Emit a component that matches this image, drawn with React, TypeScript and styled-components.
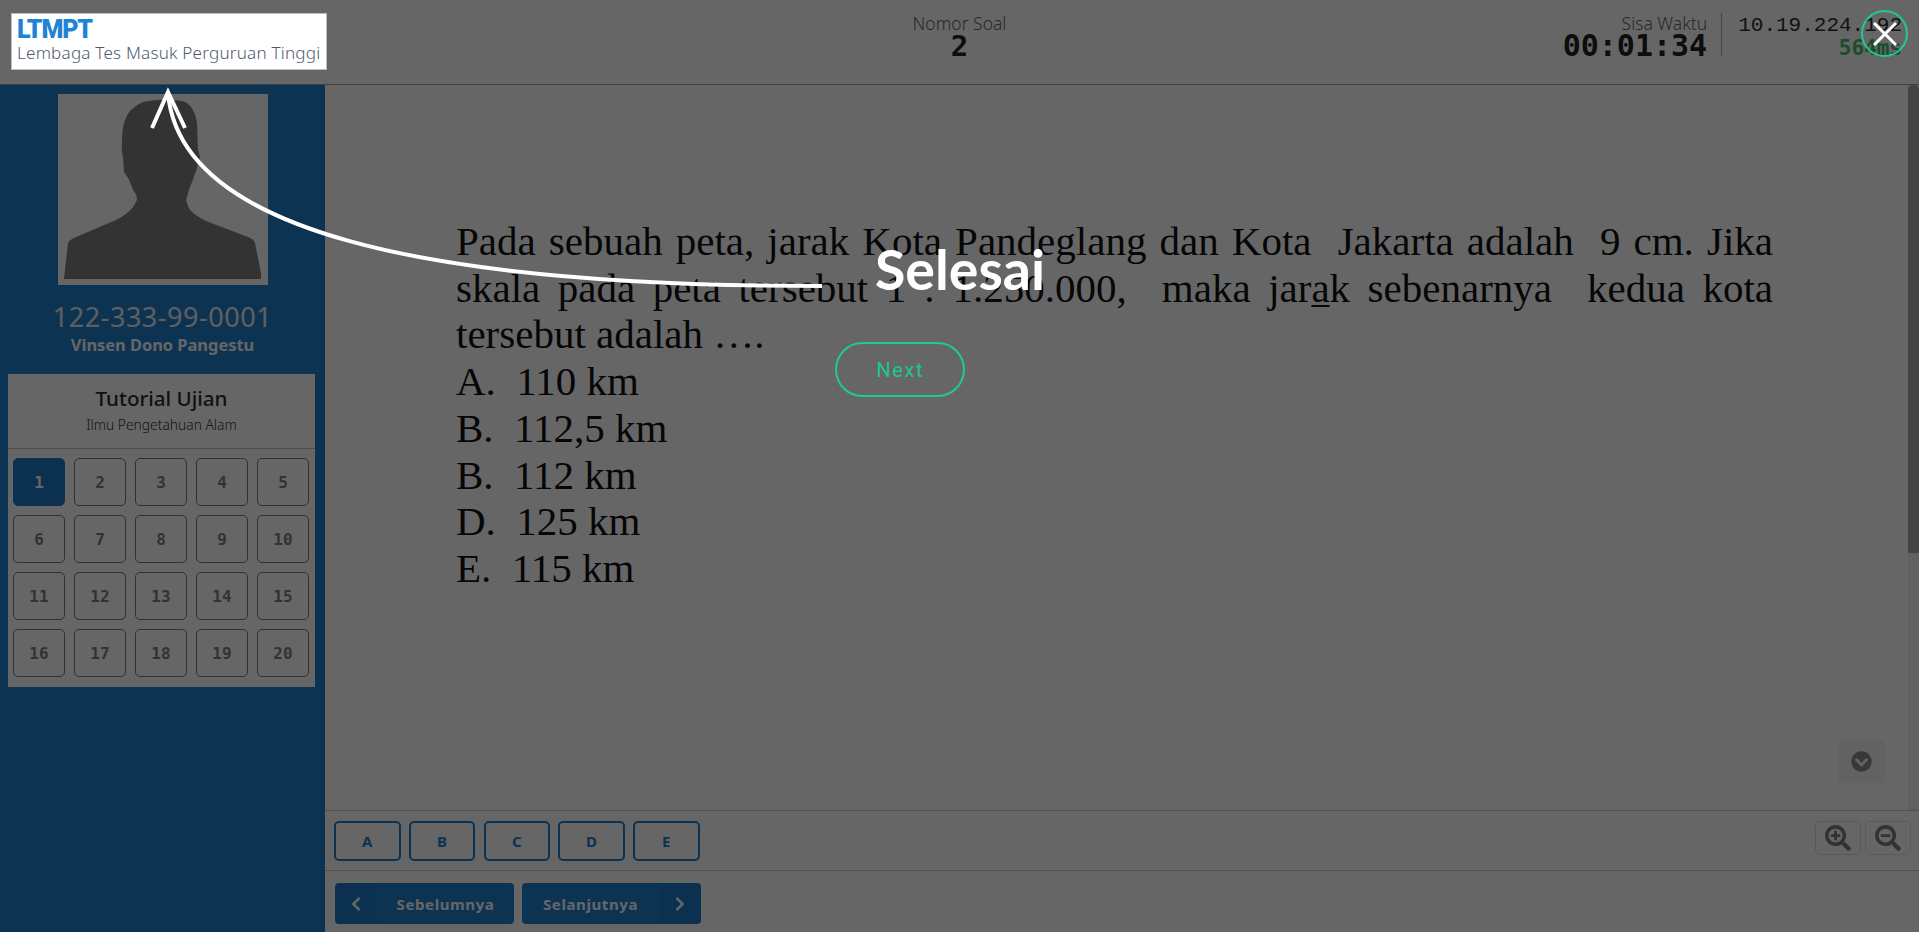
import React from "react";
import styled, { createGlobalStyle } from "styled-components";
import { FaChevronCircleDown, FaChevronLeft, FaChevronRight, FaSearchMinus, FaSearchPlus } from "react-icons/fa";

const sans = `"Noto Sans", Inter, sans-serif`;
const mono = `"DejaVu Sans Mono", "Liberation Mono", monospace`;

const Global = createGlobalStyle`
  html, body { margin: 0; padding: 0; height: 100%; overflow: hidden; background: #fff; }
  * { box-sizing: border-box; }
  #root { height: 100%; }
`;

const Page = styled.div`
  height: 932px;
  display: flex;
  flex-direction: column;
  font-family: ${sans};
`;
const Header = styled.header`
  height: 85px;
  flex: none;
  display: grid;
  grid-template-columns: 1fr auto 1fr;
  border-bottom: 1px solid #a0a0a0;
  padding: 13px 11px 0 11px;
`;
const Logo = styled.div`
  position: relative;
  z-index: 20;
  width: 316px;
  height: 57px;
  background: #fff;
  border: 1px solid #bdbdbd;
  padding: 3px 0 0 5px;
  display: flex;
  flex-direction: column;
`;
const LogoMark = styled.div`
  font-family: "Roboto", sans-serif;
  font-weight: 900;
  font-size: 25px;
  line-height: 25px;
  letter-spacing: -1.2px;
  color: #1f83d5;
`;
const LogoText = styled.div`
  font-family: "Noto Sans", sans-serif;
  font-weight: 300;
  font-size: 17.1px;
  line-height: 22px;
  white-space: nowrap;
  color: #4f5b70;
  letter-spacing: 0.2px;
`;
const Number = styled.div`
  display: flex;
  flex-direction: column;
  align-items: center;
`;
const Label = styled.div`
  font-size: 17.5px;
  line-height: 20px;
  color: #666;
  font-weight: 300;
`;
const NumberValue = styled.div`
  font-family: ${mono};
  font-weight: 700;
  font-size: 29px;
  line-height: 27px;
  color: #222;
`;
const Status = styled.div`
  display: flex;
  justify-content: flex-end;
  padding-right: 6px;
`;
const Timer = styled.div`
  display: flex;
  flex-direction: column;
  align-items: flex-end;
  padding-right: 14px;
  height: 43px;
  border-right: 1px solid #aaa;
`;
const TimerValue = styled.div`
  font-family: ${mono};
  font-weight: 700;
  font-size: 30px;
  line-height: 26px;
  color: #222;
`;
const Network = styled.div`
  display: flex;
  flex-direction: column;
  align-items: flex-end;
  padding-left: 16px;
`;
const Ip = styled.div`
  font-family: "Liberation Mono", monospace;
  font-size: 21px;
  line-height: 25px;
  color: #2e2e2e;
`;
const Ping = styled.div`
  font-family: ${mono};
  font-weight: 700;
  font-size: 21px;
  line-height: 20px;
  color: #40c070;
`;

const Body = styled.div`
  flex: 1;
  min-height: 0;
  display: flex;
`;
const Sidebar = styled.aside`
  width: 325px;
  flex: none;
  background: #2180d0;
  padding-top: 9px;
  display: flex;
  flex-direction: column;
  align-items: center;
`;
const Photo = styled.div`
  width: 210px;
  height: 191px;
  flex: none;
  background: #fff;
  display: flex;
  svg { display: block; }
`;
const Nisn = styled.div`
  margin-top: 15px;
  font-size: 27px;
  line-height: 34px;
  font-weight: 400;
  letter-spacing: 0.55px;
  color: #eee;
`;
const Name = styled.div`
  font-size: 16.4px;
  line-height: 22px;
  font-weight: 700;
  color: #fff;
`;
const Panel = styled.section`
  margin: 18px 2px 0 0;
  width: 307px;
  height: 313px;
  background: #fff;
  display: flex;
  flex-direction: column;
`;
const PanelHead = styled.div`
  height: 75px;
  flex: none;
  border-bottom: 1px solid #c0c0c0;
  text-align: center;
  padding-top: 10px;
`;
const PanelTitle = styled.div`
  font-size: 20.6px;
  font-weight: 500;
  line-height: 28px;
  color: #2b2b2b;
`;
const PanelSub = styled.div`
  font-size: 13.8px;
  font-weight: 300;
  line-height: 22px;
  margin-top: 2px;
  color: #333;
`;
const Grid = styled.div`
  display: grid;
  grid-template-columns: repeat(5, 52px);
  grid-auto-rows: 48px;
  column-gap: 9px;
  row-gap: 9px;
  padding: 9px 0 0 5px;
`;
const Cell = styled.div<{ $active?: boolean }>`
  display: flex;
  align-items: center;
  justify-content: center;
  border-radius: 5px;
  border: 1px solid ${(p) => (p.$active ? "#1f7cc9" : "#787878")};
  background: ${(p) => (p.$active ? "#1f7cc9" : "#fff")};
  font-family: ${mono};
  font-weight: 700;
  font-size: 16px;
  color: ${(p) => (p.$active ? "#fff" : "#808080")};
`;

const Content = styled.main`
  flex: 1;
  min-width: 0;
  display: flex;
  flex-direction: column;
`;
const Scroller = styled.div`
  position: relative;
  flex: 1;
  min-height: 0;
  display: flex;
`;
const Question = styled.article`
  flex: 1;
  min-width: 0;
  padding: 133px 135px 0 131px;
  font-family: "Liberation Serif", "Times New Roman", serif;
  font-size: 41px;
  line-height: 46.7px;
  color: #111;
  u { text-decoration-thickness: 2px; text-underline-offset: 3px; }
`;
const Justified = styled.p`
  margin: 0;
  text-align: justify;
  white-space: pre-wrap;
`;
const Choice = styled.div`
  white-space: pre;
`;
const Track = styled.div`
  width: 11px;
  flex: none;
  background: #f0f0f0;
`;
const Thumb = styled.div`
  height: 468px;
  background: #a8a8a8;
  border-radius: 5px 5px 0 0;
`;
const DownButton = styled.div`
  position: absolute;
  right: 34px;
  bottom: 27px;
  width: 47px;
  height: 43px;
  background: #f4f4f4;
  border-radius: 4px;
  display: flex;
  align-items: center;
  justify-content: center;
  color: #8c8c8c;
  font-size: 21px;
`;
const AnswerBar = styled.div`
  height: 61px;
  flex: none;
  border-top: 1px solid #c8c8c8;
  border-bottom: 1px solid #c8c8c8;
  display: flex;
  align-items: center;
  justify-content: space-between;
  padding: 0 8px 0 9px;
`;
const Options = styled.div`
  display: flex;
  gap: 8.25px;
`;
const Option = styled.div`
  width: 66.5px;
  height: 40px;
  border: 2px solid #2180d0;
  border-radius: 5px;
  display: flex;
  align-items: center;
  justify-content: center;
  font-size: 15px;
  font-weight: 700;
  color: #2180d0;
`;
const Tools = styled.div`
  display: flex;
  gap: 4px;
  margin-top: -6px;
`;
const Tool = styled.div`
  width: 46px;
  height: 34px;
  border: 1px solid #e2e2e2;
  border-radius: 5px;
  display: flex;
  align-items: center;
  justify-content: center;
  font-size: 26px;
  color: #808080;
`;
const NavBar = styled.div`
  height: 61px;
  flex: none;
  display: flex;
  gap: 8px;
  padding: 12px 0 0 10px;
`;
const NavButton = styled.div<{ $reverse?: boolean }>`
  width: 179px;
  height: 41px;
  background: #2180d0;
  border-radius: 4px;
  display: flex;
  flex-direction: ${(p) => (p.$reverse ? "row-reverse" : "row")};
  overflow: hidden;
  color: #fff;
`;
const NavIcon = styled.div`
  width: 42px;
  flex: none;
  background: rgba(0, 0, 0, 0.04);
  display: flex;
  align-items: center;
  justify-content: center;
  font-size: 16px;
`;
const NavLabel = styled.div`
  flex: 1;
  display: flex;
  align-items: center;
  justify-content: center;
  font-weight: 700;
  font-size: 15px;
  letter-spacing: 0.6px;
`;

const Overlay = styled.div`
  position: fixed;
  inset: 0;
  z-index: 10;
  background: rgba(0, 0, 0, 0.6);
`;
const Arrow = styled.svg`
  position: absolute;
  left: 0;
  top: 0;
  z-index: 30;
`;
const TourTitle = styled.div`
  position: absolute;
  left: 875px;
  top: 237px;
  font-family: Lato, sans-serif;
  font-weight: 700;
  font-size: 55.5px;
  line-height: 64px;
  color: #fff;
`;
const NextButton = styled.div`
  position: absolute;
  left: 835px;
  top: 342px;
  width: 130px;
  height: 55px;
  border: 2px solid #1ccb94;
  border-radius: 28px;
  display: flex;
  align-items: center;
  justify-content: center;
  font-family: Roboto, sans-serif;
  font-weight: 400;
  font-size: 20px;
  letter-spacing: 1.6px;
  color: #1ccb94;
`;
const CloseButton = styled.div`
  position: absolute;
  left: 1861px;
  top: 10px;
  width: 47px;
  height: 47px;
  border: 2px solid #1ccb94;
  border-radius: 50%;
  display: flex;
  align-items: center;
  justify-content: center;
`;

const Silhouette = () => (
  <svg width="210" height="191" viewBox="0 0 210 191">
    <path
      fill="#808080"
      d="M6 185 L10 149 Q11 146 18 143 L58 126 Q70 120 75 113 L79 106 Q79 100 75 96 Q71 84 66 78 L65 63 Q63 55 64 49 Q64 34 67 26 Q71 14 85 8 Q100 5 112 6 Q125 6 129 9 Q137 15 139 29 L140 56 L142 63 L139 74 Q135 86 132 93 L128 106 Q130 113 132 116 Q138 122 148 127 L190 143 Q196 145 197 149 L203 179 L203 185 Z"
    />
  </svg>
);

const numbers = Array.from({ length: 20 }, (_, i) => i + 1);

export default function App() {
  return (
    <Page>
      <Global />
      <Header>
        <Logo>
          <LogoMark>LTMPT</LogoMark>
          <LogoText>Lembaga Tes Masuk Perguruan Tinggi</LogoText>
        </Logo>
        <Number>
          <Label>Nomor Soal</Label>
          <NumberValue>2</NumberValue>
        </Number>
        <Status>
          <Timer>
            <Label>Sisa Waktu</Label>
            <TimerValue>00:01:34</TimerValue>
          </Timer>
          <Network>
            <Ip>10.19.224.192</Ip>
            <Ping>564ms</Ping>
          </Network>
        </Status>
      </Header>
      <Body>
        <Sidebar>
          <Photo>
            <Silhouette />
          </Photo>
          <Nisn>122-333-99-0001</Nisn>
          <Name>Vinsen Dono Pangestu</Name>
          <Panel>
            <PanelHead>
              <PanelTitle>Tutorial Ujian</PanelTitle>
              <PanelSub>Ilmu Pengetahuan Alam</PanelSub>
            </PanelHead>
            <Grid>
              {numbers.map((n) => (
                <Cell key={n} $active={n === 1}>
                  {n}
                </Cell>
              ))}
            </Grid>
          </Panel>
        </Sidebar>
        <Content>
          <Scroller>
            <Question>
              <Justified>
                Pada sebuah peta, jarak Kota Pandeglang dan Kota  Jakarta adalah  9 cm. Jika skala pada peta tersebut 1 : 1.250.000,  maka jar<u>a</u>k sebenarnya  kedua kota tersebut adalah ….
              </Justified>
              <Choice>A.  110 km</Choice>
              <Choice>B.  112,5 km</Choice>
              <Choice>B.  112 km</Choice>
              <Choice>D.  125 km</Choice>
              <Choice>E.  115 km</Choice>
            </Question>
            <Track>
              <Thumb />
            </Track>
            <DownButton>
              <FaChevronCircleDown />
            </DownButton>
          </Scroller>
          <AnswerBar>
            <Options>
              {["A", "B", "C", "D", "E"].map((o) => (
                <Option key={o}>{o}</Option>
              ))}
            </Options>
            <Tools>
              <Tool>
                <FaSearchPlus />
              </Tool>
              <Tool>
                <FaSearchMinus />
              </Tool>
            </Tools>
          </AnswerBar>
          <NavBar>
            <NavButton>
              <NavIcon>
                <FaChevronLeft />
              </NavIcon>
              <NavLabel>Sebelumnya</NavLabel>
            </NavButton>
            <NavButton $reverse>
              <NavIcon>
                <FaChevronRight />
              </NavIcon>
              <NavLabel>Selanjutnya</NavLabel>
            </NavButton>
          </NavBar>
        </Content>
      </Body>
      <Overlay>
        <TourTitle>Selesai</TourTitle>
        <NextButton>Next</NextButton>
        <CloseButton>
          <svg width="30" height="30" viewBox="0 0 30 30">
            <path d="M4 4 L26 26 M26 4 L4 26" stroke="#fff" strokeWidth="3" />
          </svg>
        </CloseButton>
      </Overlay>
      <Arrow width="1919" height="932" viewBox="0 0 1919 932" fill="none">
        <path d="M822 286 C420 286 180 230 168 93" stroke="#fff" strokeWidth="4" fill="none" />
        <path d="M152 128 L168 92 L185 128" stroke="#fff" strokeWidth="4" fill="none" />
      </Arrow>
    </Page>
  );
}
